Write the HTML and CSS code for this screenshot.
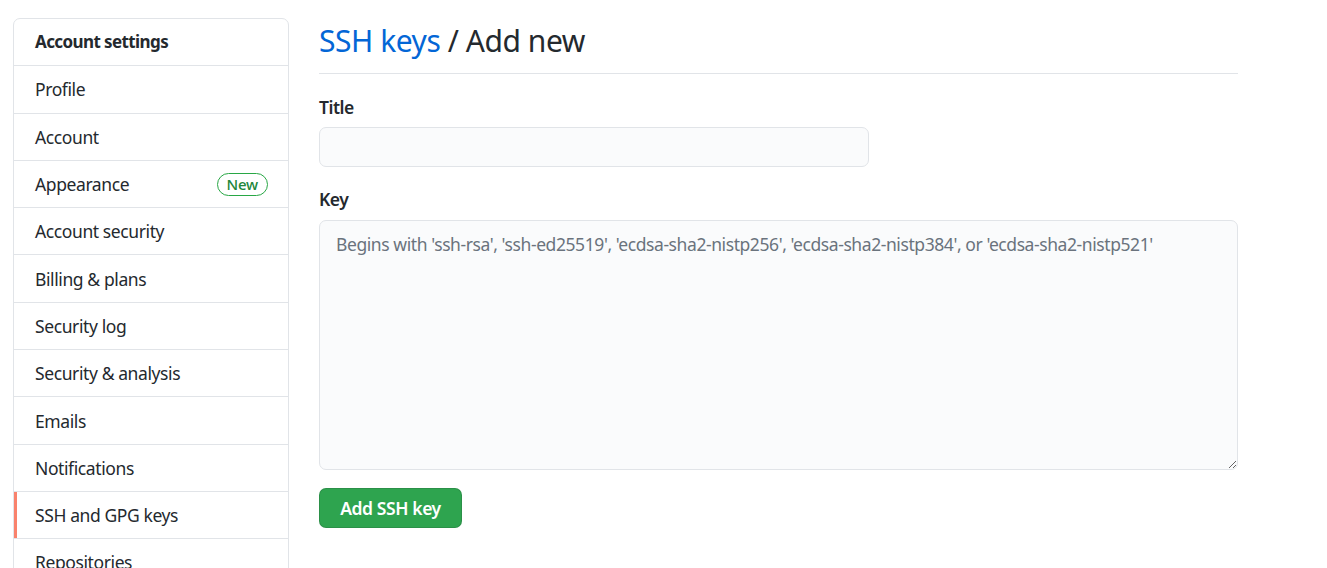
FILE: index.html
```html
<!DOCTYPE html>
<html lang="en">
<head>
<meta charset="utf-8">
<title>SSH keys / Add new</title>
<link rel="stylesheet" href="styles.css">
</head>
<body>
<div class="layout">
  <nav class="menu">
    <div class="menu-heading">Account settings</div>
    <a class="menu-item" href="#">Profile</a>
    <a class="menu-item" href="#">Account</a>
    <a class="menu-item" href="#">Appearance <span class="badge">New</span></a>
    <a class="menu-item" href="#">Account security</a>
    <a class="menu-item" href="#">Billing &amp; plans</a>
    <a class="menu-item" href="#">Security log</a>
    <a class="menu-item" href="#">Security &amp; analysis</a>
    <a class="menu-item" href="#">Emails</a>
    <a class="menu-item" href="#">Notifications</a>
    <a class="menu-item selected" href="#">SSH and GPG keys</a>
    <a class="menu-item" href="#">Repositories</a>
  </nav>
  <main class="main">
    <div class="subhead">
      <h2 class="subhead-heading"><a href="#" class="crumb">SSH keys</a> / Add new</h2>
    </div>
    <form class="form">
      <label class="label" for="title">Title</label>
      <input class="input" id="title" type="text">
      <label class="label label-key" for="key">Key</label>
      <textarea class="textarea" id="key" placeholder="Begins with 'ssh-rsa', 'ssh-ed25519', 'ecdsa-sha2-nistp256', 'ecdsa-sha2-nistp384', or 'ecdsa-sha2-nistp521'"></textarea>
      <button class="btn" type="button">Add SSH key</button>
    </form>
  </main>
</div>
</body>
</html>
```

FILE: styles.css
```css
* { box-sizing: border-box; }
html, body { margin: 0; padding: 0; background: #fff; }
body {
  font-family: "Noto Sans", "Open Sans", sans-serif;
  font-size: 17.5px;
  letter-spacing: -0.4px;
  color: #24292e;
  overflow: hidden;
}
.layout {
  display: flex;
  align-items: flex-start;
  padding: 18px 0 0 13px;
}
.menu {
  width: 276px;
  flex: none;
  border: 1px solid #e1e4e8;
  border-radius: 7px;
  background: #fff;
}
.menu-heading {
  padding: 12px 21px;
  line-height: 22.3px;
  font-weight: 700;
  font-size: 17px;
  letter-spacing: -0.6px;
}
.menu-item {
  position: relative;
  display: flex;
  align-items: center;
  justify-content: space-between;
  height: 47.3px;
  padding: 0 20px 0 21px;
  border-top: 1px solid #e1e4e8;
  color: #24292e;
  text-decoration: none;
}
.menu-item.selected::before {
  content: "";
  position: absolute;
  left: 0;
  top: 0;
  bottom: 0;
  width: 3px;
  background: #f9826c;
}
.badge {
  display: inline-block;
  height: 23px;
  line-height: 20px;
  padding: 0 9px;
  border: 1px solid #28a745;
  border-radius: 12px;
  font-size: 15px;
  font-weight: 500;
  letter-spacing: -0.2px;
  color: #22863a;
}
.main {
  margin-left: 30px;
  width: 919px;
}
.subhead {
  padding-bottom: 10px;
  border-bottom: 1px solid #e1e4e8;
  margin-bottom: 20px;
}
.subhead-heading {
  margin: 0;
  font-size: 30px;
  font-weight: 400;
  line-height: 45px;
  letter-spacing: -0.45px;
}
.crumb { color: #0366d6; text-decoration: none; }
.form { display: flex; flex-direction: column; align-items: flex-start; }
.label {
  font-weight: 600;
  line-height: 26px;
  margin-bottom: 7px;
  letter-spacing: -0.5px;
}
.label-key { margin-top: 19px; margin-bottom: 8px; }
.input {
  width: 550px;
  height: 40px;
  border: 1px solid #e1e4e8;
  border-radius: 7px;
  background: #fafbfc;
  font: inherit;
  padding: 6px 15px;
}
.textarea {
  width: 919px;
  height: 250px;
  border: 1px solid #e1e4e8;
  border-radius: 7px;
  background: #fafbfc;
  font: inherit;
  letter-spacing: -0.42px;
  line-height: 26px;
  padding: 10px 16px;
  resize: vertical;
  color: #24292e;
}
.textarea::placeholder { color: #6a737d; opacity: 1; }
.btn {
  margin-top: 18px;
  width: 143px;
  height: 40px;
  border: 1px solid rgba(27,31,35,0.15);
  border-radius: 7px;
  background: #2ea44f;
  color: #fff;
  font: inherit;
  font-weight: 600;
  letter-spacing: -0.4px;
  padding: 0;
}
```
